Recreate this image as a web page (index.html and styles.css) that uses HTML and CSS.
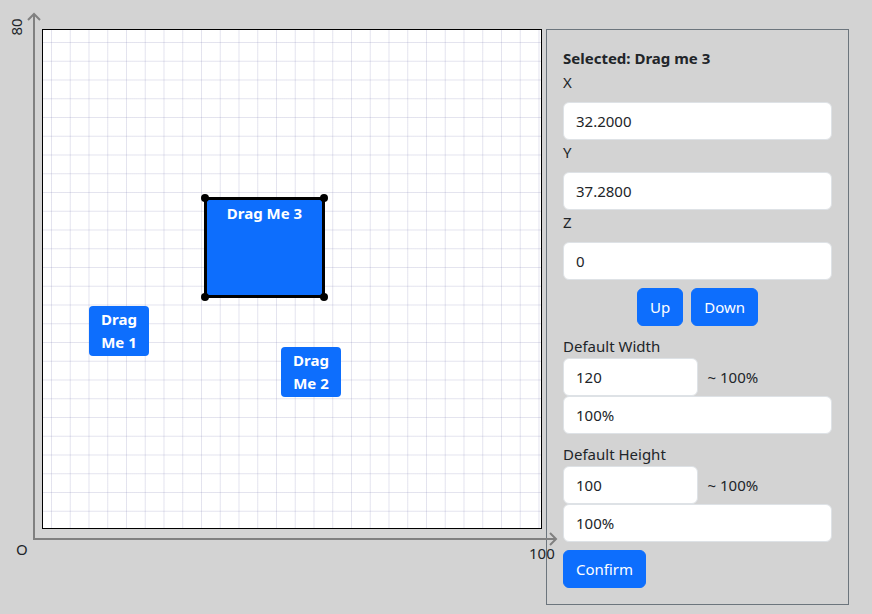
FILE: index.html
```html
<!DOCTYPE html>
<html>
<head>
<meta charset="utf-8">
<link rel="stylesheet" href="styles.css">
</head>
<body>
<div class="app">
  <div class="stage">
    <div class="canvas">
      <div class="node node-1">Drag Me 1</div>
      <div class="node node-2">Drag Me 2</div>
      <div class="node node-3 selected">
        Drag Me 3
        <span class="handle tl"></span><span class="handle tr"></span>
        <span class="handle bl"></span><span class="handle br"></span>
      </div>
    </div>
    <svg class="axes" width="600" height="580" viewBox="0 0 600 580">
      <g fill="none" stroke="#808080" stroke-width="2">
        <line x1="34" y1="540" x2="34" y2="14"/>
        <line x1="33" y1="539" x2="556" y2="539"/>
        <polyline points="28,20 34,14 40,20"/>
        <polyline points="550,533 556,539 550,545"/>
      </g>
    </svg>
    <span class="axis-label label-y">80</span>
    <span class="axis-label label-o">O</span>
    <span class="axis-label label-x">100</span>
  </div>
  <aside class="panel">
    <div class="title">Selected: Drag me 3</div>
    <label class="label">X</label>
    <input class="field" value="32.2000">
    <label class="label">Y</label>
    <input class="field" value="37.2800">
    <label class="label">Z</label>
    <input class="field" value="0">
    <div class="order">
      <button class="btn">Up</button>
      <button class="btn">Down</button>
    </div>
    <label class="label">Default Width</label>
    <div class="size-row">
      <input class="field half" value="120">
      <span class="approx">~ 100%</span>
    </div>
    <input class="field" value="100%">
    <label class="label">Default Height</label>
    <div class="size-row">
      <input class="field half" value="100">
      <span class="approx">~ 100%</span>
    </div>
    <input class="field" value="100%">
    <div class="actions">
      <button class="btn">Confirm</button>
    </div>
  </aside>
</div>
</body>
</html>
```

FILE: styles.css
```css
* { box-sizing: border-box; }

html, body {
  margin: 0;
  background: #d3d3d3;
  font-family: "Noto Sans", "Open Sans", sans-serif;
  font-size: 16px;
  color: #212529;
}

.app {
  display: flex;
  align-items: flex-start;
  padding: 29px 0 0 42px;
}

.stage {
  position: relative;
  width: 500px;
  height: 500px;
  flex: none;
}

.canvas {
  position: relative;
  width: 500px;
  height: 500px;
  border: 1px solid #000;
  background-color: #fff;
  background-image:
    linear-gradient(to right, rgba(130, 130, 180, 0.22) 1px, transparent 1px),
    linear-gradient(to bottom, rgba(130, 130, 180, 0.22) 1px, transparent 1px);
  background-size: 18.75px 18.75px;
  background-position: 8px 12px;
  z-index: 1;
}

.node {
  position: absolute;
  background: #0d6efd;
  color: #fff;
  font-weight: 700;
  font-size: 15px;
  line-height: 23px;
  text-align: center;
  border-radius: 4px;
}

.node-1 { left: 46px; top: 276px; width: 60px; height: 50px; padding: 2px 8px; }
.node-2 { left: 238px; top: 317px; width: 60px; height: 50px; padding: 2px 8px; }

.node-3 {
  left: 161px;
  top: 167px;
  width: 121px;
  height: 101px;
  border: 3px solid #000;
  padding-top: 1px;
  line-height: 24px;
}

.handle {
  position: absolute;
  width: 8px;
  height: 8px;
  border-radius: 50%;
  background: #000;
}
.handle.tl { left: -6px; top: -6px; }
.handle.tr { right: -6px; top: -6px; }
.handle.bl { left: -6px; bottom: -6px; }
.handle.br { right: -6px; bottom: -6px; }

.axes {
  position: absolute;
  left: -42px;
  top: -29px;
  pointer-events: none;
  z-index: 3;
}

.axis-label {
  position: absolute;
  font-size: 15px;
  line-height: 20px;
  color: #212529;
  z-index: 3;
}
.label-y {
  left: -35px;
  top: -12px;
  transform: rotate(-90deg);
}
.label-o { left: -26px; top: 510px; }
.label-x { left: 487px; top: 514px; }

.panel {
  flex: none;
  width: 303px;
  margin-left: 4px;
  border: 1px solid #6c757d;
  padding: 16px;
  display: flex;
  flex-direction: column;
}

.title {
  font-weight: 700;
  font-size: 15px;
  line-height: 24px;
}

.label {
  display: block;
  line-height: 24px;
  font-size: 15px;
}

.field {
  display: block;
  width: 100%;
  height: 38px;
  padding: 6px 12px;
  font: inherit;
  font-size: 15px;
  color: #212529;
  background: #fff;
  border: 1px solid #dee2e6;
  border-radius: 6px;
  outline: none;
}

.label + .field { margin-top: 8px; }

.order {
  display: flex;
  justify-content: center;
  gap: 8px;
  margin: 8px 0;
}

.btn {
  font: inherit;
  font-size: 15px;
  line-height: 24px;
  padding: 6px 12px;
  color: #fff;
  background: #0d6efd;
  border: 1px solid #0d6efd;
  border-radius: 6px;
}

.size-row {
  display: flex;
  align-items: center;
}

.size-row .half {
  width: 50%;
  flex: none;
}

.approx {
  margin-left: 10px;
  font-size: 15px;
}

.size-row + .field + .label { margin-top: 8px; }

.actions {
  display: flex;
  margin-top: 8px;
}
```
